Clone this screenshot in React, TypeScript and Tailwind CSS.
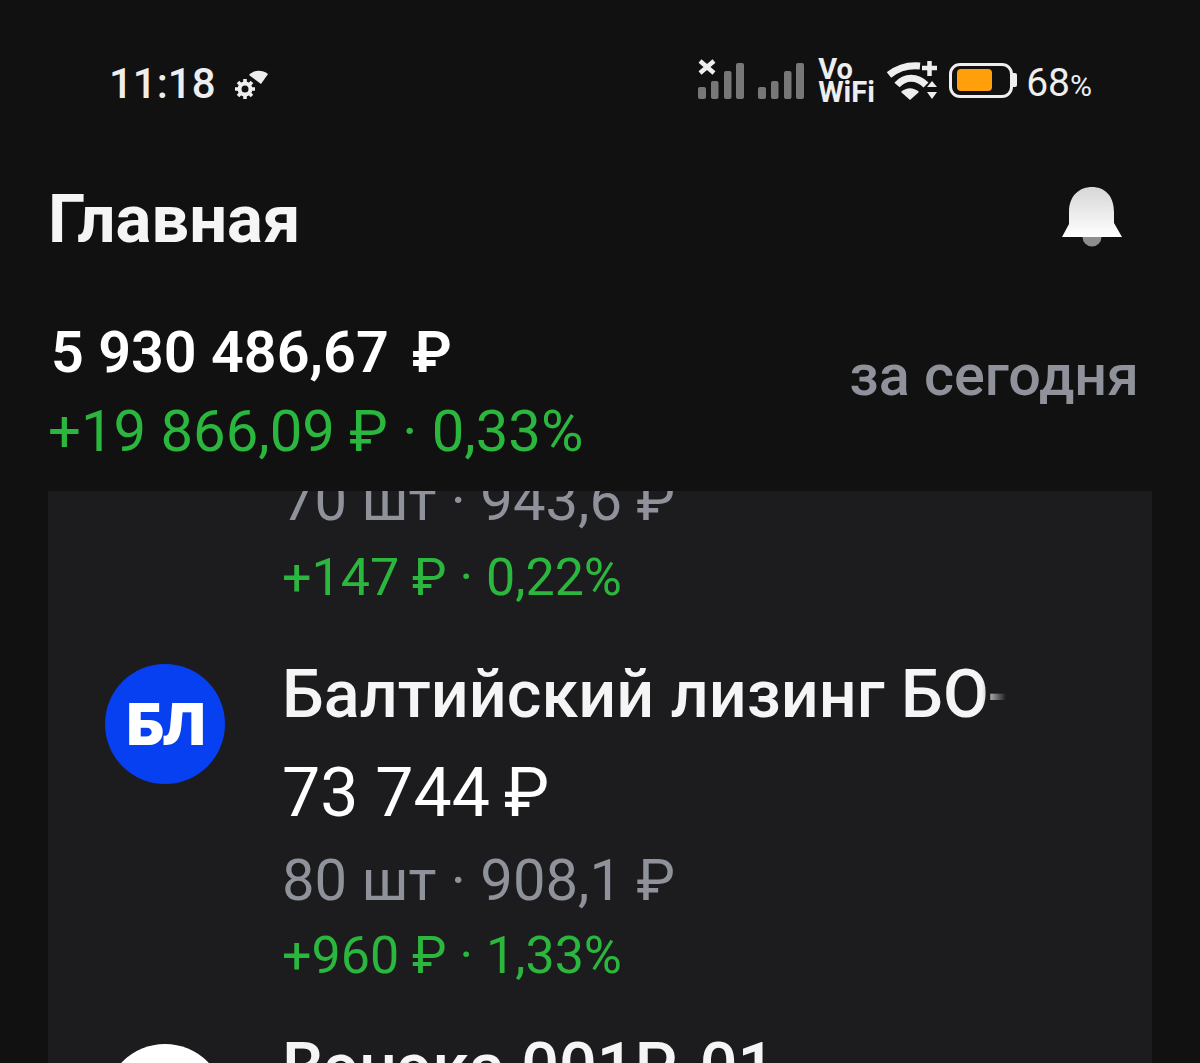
const font = "font-['Roboto',sans-serif]";

function GearWedge() {
  return (
    <svg width="34" height="32" viewBox="0 0 34 32" className="ml-[18px] mt-[3px]">
      <path d="M15 7 C20 1.5 28 1.5 34 6 L27 16 Z" fill="#eeeeee" />
      <g fill="none" stroke="#eeeeee">
        <circle cx="11" cy="21" r="5.5" strokeWidth="4" />
        <path d="M11 11v4M11 27v4M1 21h4M17 21h4M4 14l3 3M15 25l3 3M18 14l-3 3M7 25l-3 3" strokeWidth="3.6" />
      </g>
    </svg>
  );
}

function Signal({ crossed }: { crossed?: boolean }) {
  return (
    <svg width="46" height="40" viewBox="0 0 46 40">
      <g fill="#777777">
        <rect x="0" y="28" width="8" height="12" rx="2" />
        <rect x="13" y="22" width="7.5" height="18" rx="2" />
        <rect x="26" y="12" width="7.5" height="28" rx="2" />
        <rect x="38" y="4" width="8" height="36" rx="2" />
      </g>
      {crossed && (
        <path d="M2 2 L16 14 M16 2 L2 14" stroke="#eeeeee" strokeWidth="4.5" />
      )}
    </svg>
  );
}

function Wifi() {
  return (
    <svg width="50" height="40" viewBox="0 0 50 40" fill="none">
      <path d="M2 15 C12 7 22 5 33 6" stroke="#eeeeee" strokeWidth="7" />
      <path d="M10 25 C18 16 30 16 39 25" stroke="#eeeeee" strokeWidth="7" />
      <path d="M14 32 L23 40 L32 32 C26 27 20 27 14 32 Z" fill="#eeeeee" />
      <path d="M35 8h15M42.5 1v15" stroke="#eeeeee" strokeWidth="4.5" />
      <path d="M40 27 L45 21 L50 27 Z M40 32 L50 32 L45 39 Z" fill="#eeeeee" />
    </svg>
  );
}

function Battery() {
  return (
    <div className="flex items-center">
      <div className="flex h-[35px] w-[64px] items-center rounded-[11px] border-[3px] border-[#eeeeee] pl-[5px]">
        <div className="h-[22px] w-[35px] rounded-[4px] bg-[#ff9f0a]" />
      </div>
      <div className="h-[14px] w-[4px] rounded-r-[2px] bg-[#eeeeee]" />
    </div>
  );
}

function Bell() {
  return (
    <svg width="60" height="60" viewBox="0 0 60 60">
      <defs>
        <linearGradient id="bell" x1="0" y1="0" x2="0" y2="1">
          <stop offset="0" stopColor="#d6d6d6" />
          <stop offset="1" stopColor="#ffffff" />
        </linearGradient>
      </defs>
      <circle cx="30" cy="50" r="9.5" fill="#8e8e8e" />
      <path d="M7 25 C7 8 18 0 30 0 C42 0 52 8 52 25 V36 L60 50 H0 L7 37 Z" fill="url(#bell)" />
    </svg>
  );
}

export default function App() {
  return (
    <div className={`flex h-[1063px] w-[1200px] flex-col overflow-hidden bg-[#111112] ${font}`}>
      {/* Status bar */}
      <div className="mt-[62px] flex h-[40px] items-center justify-between pl-[109px] pr-[108px]">
        <div className="flex items-center">
          <span className="mt-[4px] text-[42px] font-medium leading-none text-[#eeeeee]">11:18</span>
          <GearWedge />
        </div>
        <div className="flex items-center">
          <div className="mb-[6px] flex items-center">
            <Signal crossed />
            <div className="ml-[14px]">
              <Signal />
            </div>
          </div>
          <div className="mb-[3px] ml-[14px] flex w-[59px] flex-col text-[29px] font-bold leading-[23px] text-[#eeeeee]">
            <span>Vo</span>
            <span>WiFi</span>
          </div>
          <div className="mb-[4px] ml-[10px]">
            <Wifi />
          </div>
          <div className="mb-[4px] ml-[12px]">
            <Battery />
          </div>
          <span className="ml-[9px] mt-[2px] text-[39px] leading-none text-[#eeeeee]">
            68<span className="text-[30px]">%</span>
          </span>
        </div>
      </div>

      {/* Header */}
      <div className="mt-[85px] flex h-[60px] items-center justify-between pl-[48px] pr-[78px]">
        <h1 className="mt-[5px] text-[67px] font-bold leading-none text-[#f5f5f6]">Главная</h1>
        <Bell />
      </div>

      {/* Portfolio total */}
      <div className="mt-[74px] flex items-start justify-between pl-[48px] pr-[61px]">
        <div>
          <div className="pl-[3px] text-[57.5px] font-semibold leading-[64px] text-white">
            5 930 486,67<span className="ml-[23px]">₽</span>
          </div>
          <div className="mt-[14px] text-[58px] leading-[64px] text-[#2bb63e]">+19 866,09 ₽ · 0,33%</div>
        </div>
        <div className="mt-[23px] text-[57.5px] font-medium leading-[64px] text-[#8f929a]">за сегодня</div>
      </div>

      {/* Positions */}
      <div className="mx-[48px] mt-[28px] flex-1 overflow-hidden bg-[#1c1c1e] pl-[57px]">
        <div className="-mt-[23px] pl-[177px]">
          <div className="text-[58px] leading-[64px] text-[#8f929a]">70 шт · 943,6 ₽</div>
          <div className="mt-[14px] text-[52px] leading-[64px] text-[#2bb63e]">+147 ₽ · 0,22%</div>
        </div>

        <div className="mt-[52px] flex">
          <div className="mt-[2px] flex h-[120px] w-[120px] shrink-0 items-center justify-center rounded-full bg-[#0640f0]">
            <span className="font-['Inter',sans-serif] text-[58px] font-black leading-none tracking-[-2px] text-white">БЛ</span>
          </div>
          <div className="ml-[57px]">
            <div className="relative w-[724px] overflow-hidden whitespace-nowrap text-[66.5px] font-medium leading-[64px] text-[#f5f5f6]">
              Балтийский лизинг БО<span className="-ml-[1px]">-</span>
              <div className="absolute inset-y-0 right-0 w-[24px] bg-gradient-to-r from-transparent to-[#1c1c1e]" />
            </div>
            <div className="mt-[35px] text-[68px] leading-[64px] text-white">
              73 744<span className="ml-[14px]">₽</span>
            </div>
            <div className="mt-[23px] text-[58px] leading-[64px] text-[#8f929a]">80 шт · 908,1 ₽</div>
            <div className="mt-[12px] text-[52px] leading-[64px] text-[#2bb63e]">+960 ₽ · 1,33%</div>
          </div>
        </div>

        <div className="mt-[47px] flex">
          <div className="mt-[9px] h-[120px] w-[120px] shrink-0 rounded-full bg-white" />
          <div className="ml-[57px] whitespace-nowrap text-[66.5px] font-medium leading-[64px] text-[#f5f5f6]">
            Вэнэка 001Р-01
          </div>
        </div>
      </div>
    </div>
  );
}
